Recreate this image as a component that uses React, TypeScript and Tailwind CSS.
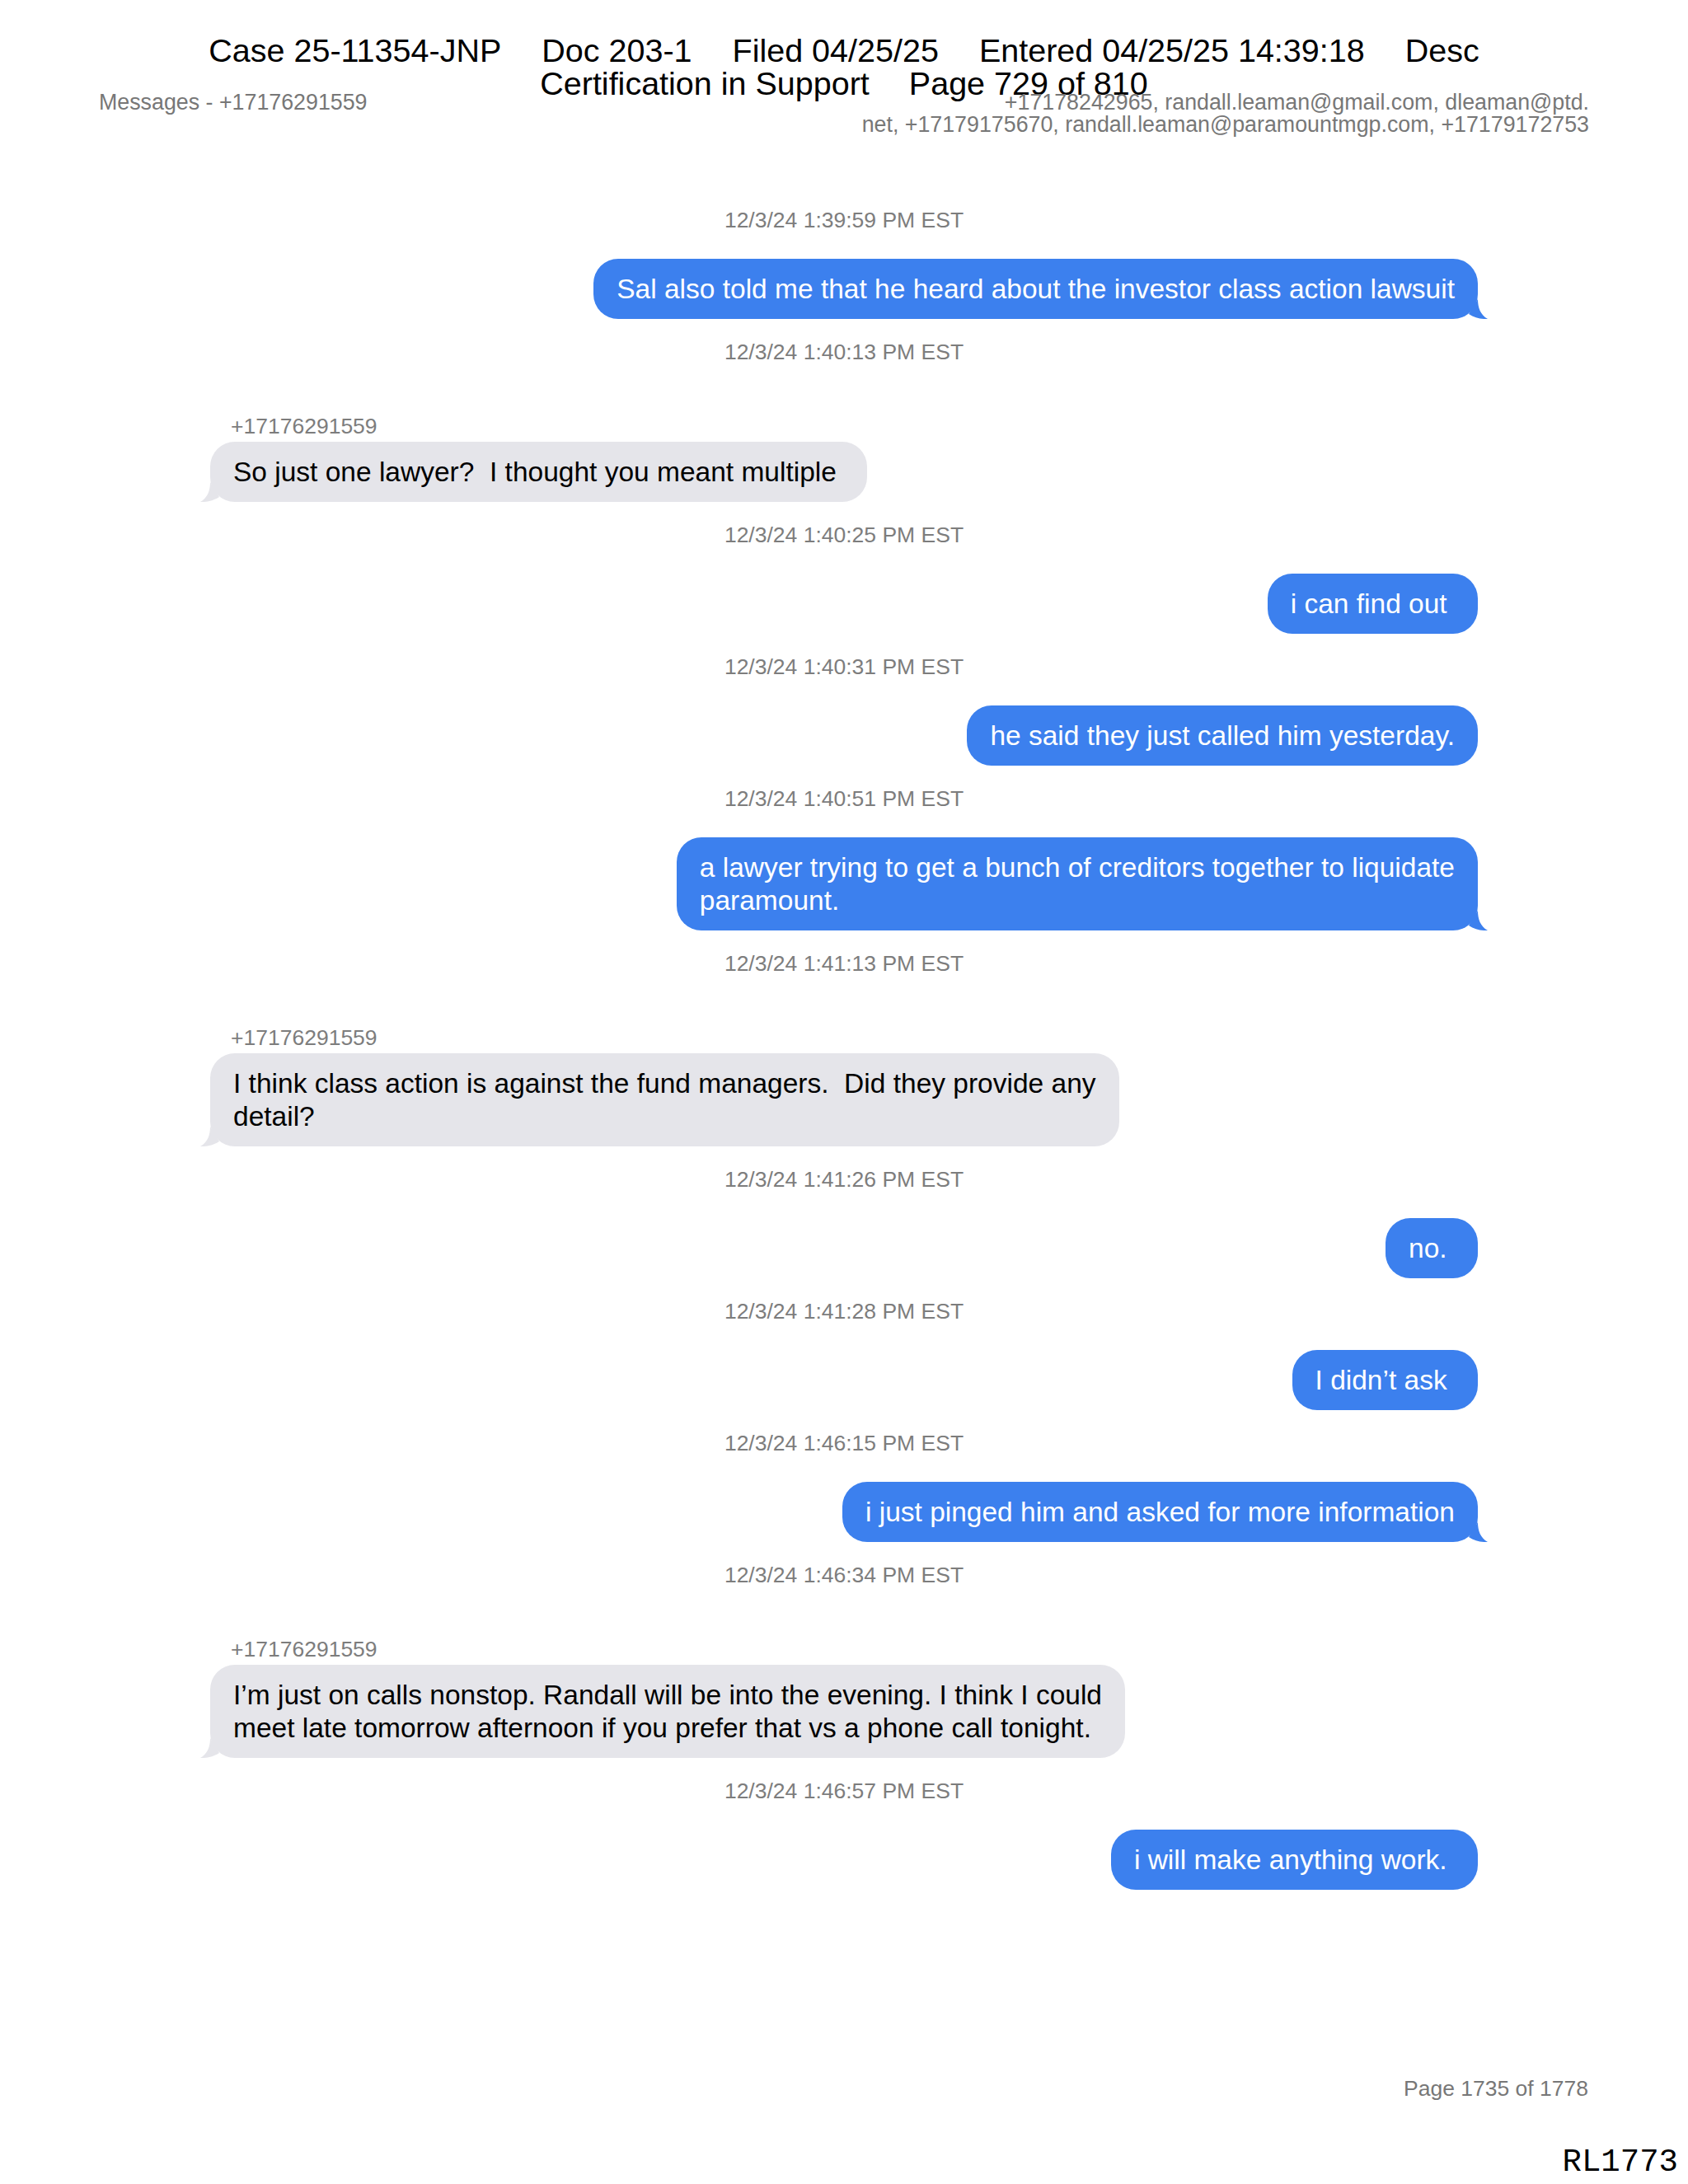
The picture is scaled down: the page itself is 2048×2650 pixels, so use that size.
type Msg = {
  time: string;
  me: boolean;
  sender?: string;
  lines: string[];
  tail?: boolean;
};

const messages: Msg[] = [
  { time: "12/3/24 1:39:59 PM EST", me: true, lines: ["Sal also told me that he heard about the investor class action lawsuit"], tail: true },
  { time: "12/3/24 1:40:13 PM EST", me: false, sender: "+17176291559", lines: ["So just one lawyer?  I thought you meant multiple "], tail: true },
  { time: "12/3/24 1:40:25 PM EST", me: true, lines: ["i can find out "] },
  { time: "12/3/24 1:40:31 PM EST", me: true, lines: ["he said they just called him yesterday."] },
  {
    time: "12/3/24 1:40:51 PM EST",
    me: true,
    lines: ["a lawyer trying to get a bunch of creditors together to liquidate", "paramount."],
    tail: true,
  },
  {
    time: "12/3/24 1:41:13 PM EST",
    me: false,
    sender: "+17176291559",
    lines: ["I think class action is against the fund managers.  Did they provide any", "detail?"],
    tail: true,
  },
  { time: "12/3/24 1:41:26 PM EST", me: true, lines: ["no. "] },
  { time: "12/3/24 1:41:28 PM EST", me: true, lines: ["I didn\u2019t ask "] },
  { time: "12/3/24 1:46:15 PM EST", me: true, lines: ["i just pinged him and asked for more information"], tail: true },
  {
    time: "12/3/24 1:46:34 PM EST",
    me: false,
    sender: "+17176291559",
    lines: [
      "I\u2019m just on calls nonstop. Randall will be into the evening. I think I could",
      "meet late tomorrow afternoon if you prefer that vs a phone call tonight.",
    ],
    tail: true,
  },
  { time: "12/3/24 1:46:57 PM EST", me: true, lines: ["i will make anything work. "] },
];

const Tail = ({ me }: { me: boolean }) => (
  <svg
    width="28"
    height="24"
    viewBox="0 0 28 24"
    className={
      me
        ? "absolute bottom-0 right-[-12px]"
        : "absolute bottom-0 left-[-12px] -scale-x-100"
    }
  >
    <path
      d="M16 0 C16 10 19 19 28 24 C20 24.5 12 22.5 5 18 Z"
      fill={me ? "#3c80ee" : "#e5e5ea"}
    />
  </svg>
);

const Bubble = ({ msg }: { msg: Msg }) => (
  <div
    className={`relative whitespace-pre rounded-[30px] px-[28px] py-[16.5px] text-[33.5px] leading-[40px] ${
      msg.me ? "bg-[#3c80ee] text-white" : "bg-[#e5e5ea] text-black"
    }`}
  >
    {msg.lines.map((l, i) => (
      <div key={i}>{l}</div>
    ))}
    {msg.tail && <Tail me={msg.me} />}
  </div>
);

export default function App() {
  return (
    <div className="flex h-[2650px] w-[2048px] flex-col bg-white font-['Liberation_Sans',Arial,sans-serif]">
      {/* court stamp */}
      <div className="flex flex-col items-center pt-[41px] text-[39.5px] leading-[40px] text-black">
        <div className="flex gap-[49px] whitespace-pre">
          <span>Case 25-11354-JNP</span>
          <span>Doc 203-1</span>
          <span>Filed 04/25/25</span>
          <span>Entered 04/25/25 14:39:18</span>
          <span>Desc</span>
        </div>
        <div className="flex gap-[48px] whitespace-pre">
          <span>Certification in Support</span>
          <span>Page 729 of 810</span>
        </div>
      </div>

      <div className="-mt-[10px] flex items-start justify-between px-[120px] text-[26.8px] leading-[27px] text-[#777777]">
        <div>Messages - +17176291559</div>
        <div className="text-right">
          <div>+17178242965, randall.leaman@gmail.com, dleaman@ptd.</div>
          <div>net, +17179175670, randall.leaman@paramountmgp.com, +17179172753</div>
        </div>
      </div>

      <div className="flex flex-col px-[255px]">
        {messages.map((m, i) => (
          <div key={i} className="flex flex-col">
            <div
              className={`${i === 0 ? "mt-[86px]" : "mt-[24px]"} text-center text-[26.5px] leading-[32px] text-[#7d7d7d]`}
            >
              {m.time}
            </div>
            {m.sender && (
              <div className="ml-[25px] mt-[58px] text-[26.5px] leading-[32px] text-[#7d7d7d]">
                {m.sender}
              </div>
            )}
            <div className={`flex ${m.me ? "justify-end" : "justify-start"} ${m.sender ? "mt-[3px]" : "mt-[31px]"}`}>
              <Bubble msg={m} />
            </div>
          </div>
        ))}
      </div>

      <div className="mt-auto flex flex-col items-end">
        <div className="pr-[121px] text-[26.5px] leading-[32px] text-[#777777]">Page 1735 of 1778</div>
        <div className="mt-[52px] pb-[4px] pr-[12px] font-['Liberation_Mono',monospace] text-[39px] leading-[44px] text-black">
          RL1773
        </div>
      </div>
    </div>
  );
}
